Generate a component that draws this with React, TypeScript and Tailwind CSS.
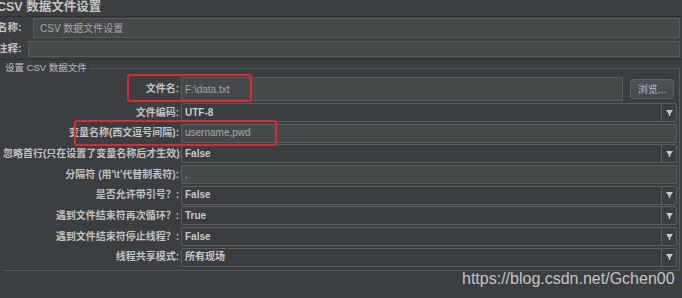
import React from "react";

const FONT = "'Liberation Sans', 'Noto Sans CJK SC', sans-serif";

function Arrow() {
  return (
    <div className="w-[15px] h-full border-l border-[#5a5d5f] flex items-center justify-center">
      <svg width="7" height="6" viewBox="0 0 7 6">
        <polygon points="0,0 7,0 4.2,4 4.2,6 2.8,6 2.8,4" fill="#c9c9c9" />
      </svg>
    </div>
  );
}

function Label({ text }: { text: string }) {
  return (
    <div className="w-[178px] shrink-0 pr-[2px] text-right text-[10px] font-semibold text-[#c2c2c2] whitespace-nowrap leading-[12px]">
      {text}
    </div>
  );
}

function ComboRow({ label, value }: { label: string; value: string }) {
  return (
    <div className="flex items-center h-[19px] pr-[2px]">
      <Label text={label} />
      <div className="flex-1 h-full flex items-center border border-[#5a5d5f] rounded-[2px] bg-[#3b3e40]">
        <div className="flex-1 pl-[3px] text-[10px] font-semibold text-[#c8c8c8] leading-[12px]">{value}</div>
        <Arrow />
      </div>
    </div>
  );
}

function TextRow({ label, value }: { label: string; value: string }) {
  return (
    <div className="flex items-center h-[19px] pr-[2px]">
      <Label text={label} />
      <div className="flex-1 h-full flex items-center border border-[#595d5f] rounded-[1px] bg-[#45494a] pl-[3px] text-[10px] text-[#a8a8a8] leading-[12px]">
        {value}
      </div>
    </div>
  );
}

export default function App() {
  return (
    <div className="relative w-[682px] h-[298px] overflow-hidden bg-[#3c3f41]" style={{ fontFamily: FONT }}>
      <div className="h-[17px] border-b border-[#2e3032] overflow-hidden">
        <div className="-ml-[3px] text-[12.5px] font-bold text-[#c6c6c6] leading-[14px] whitespace-nowrap">CSV 数据文件设置</div>
      </div>
      <div className="mt-[1px] flex items-center h-[20px] pr-[2px]">
        <div className="w-[33px] shrink-0 -ml-[3px] pl-0 text-[10.5px] font-semibold text-[#c2c2c2] whitespace-nowrap">名称:</div>
        <div className="ml-[3px] flex-1 h-full flex items-center border border-[#575b5d] bg-[#45494a] pl-[6px] text-[10px] text-[#a8a8a8]">CSV 数据文件设置</div>
      </div>
      <div className="mt-[3px] flex items-center h-[16px] pr-[2px]">
        <div className="w-[28px] shrink-0 -ml-[3px] text-[10.5px] font-semibold text-[#c2c2c2] whitespace-nowrap">注释:</div>
        <div className="ml-[3px] flex-1 h-full border border-[#575b5d] bg-[#45494a]" />
      </div>
      <div className="mt-[1px] h-[2px] border-b border-[#2e3032]" />

      <div className="relative mt-[8px] ml-[3px] w-[677px] border-t border-r border-b border-[#56595b] pb-[3px]">
        <div className="absolute -top-[7px] left-[0px] bg-[#3c3f41] pl-[2px] pr-[3px] text-[9.5px] text-[#bdbdbd] leading-[12px] whitespace-nowrap">
          设置 CSV 数据文件
        </div>
        <div className="pt-[8px] flex items-center h-[32px] pr-[5px]">
          <Label text="文件名:" />
          <div className="w-[442px] h-[24px] flex items-center border border-[#595d5f] bg-[#45494a] pl-[3px] text-[10px] text-[#a3a3a3]">
            F:\data.txt
          </div>
          <div className="ml-[7px] w-[44px] h-[20px] flex items-center justify-center border border-[#5c5f61] rounded-[3px] bg-gradient-to-b from-[#4e5254] to-[#45494b] text-[10px] text-[#bdbdbd]">
            浏览...
          </div>
        </div>
        <div className="mt-[2px] flex flex-col gap-[1.7px]">
          <ComboRow label="文件编码:" value="UTF-8" />
          <TextRow label="变量名称(西文逗号间隔):" value="username,pwd" />
          <ComboRow label="忽略首行(只在设置了变量名称后才生效):" value="False" />
          <TextRow label="分隔符 (用'\t'代替制表符):" value="," />
          <ComboRow label="是否允许带引号？:" value="False" />
          <ComboRow label="遇到文件结束符再次循环？:" value="True" />
          <ComboRow label="遇到文件结束符停止线程？:" value="False" />
          <ComboRow label="线程共享模式:" value="所有现场" />
        </div>
      </div>

      <div className="absolute left-[127px] top-[74px] w-[125px] h-[28px] border-2 border-[#e3262b] rounded-[3px]" />
      <div className="absolute left-[74px] top-[120px] w-[203px] h-[26px] border-2 border-[#e3262b] rounded-[3px]" />

      <div className="absolute left-[462px] top-[271px] text-[16px] leading-[16px] text-[#c4c4c4] whitespace-nowrap" style={{ fontFamily: "'Liberation Sans', Arial, sans-serif" }}>
        https://blog.csdn.net/Gchen00
      </div>
    </div>
  );
}
